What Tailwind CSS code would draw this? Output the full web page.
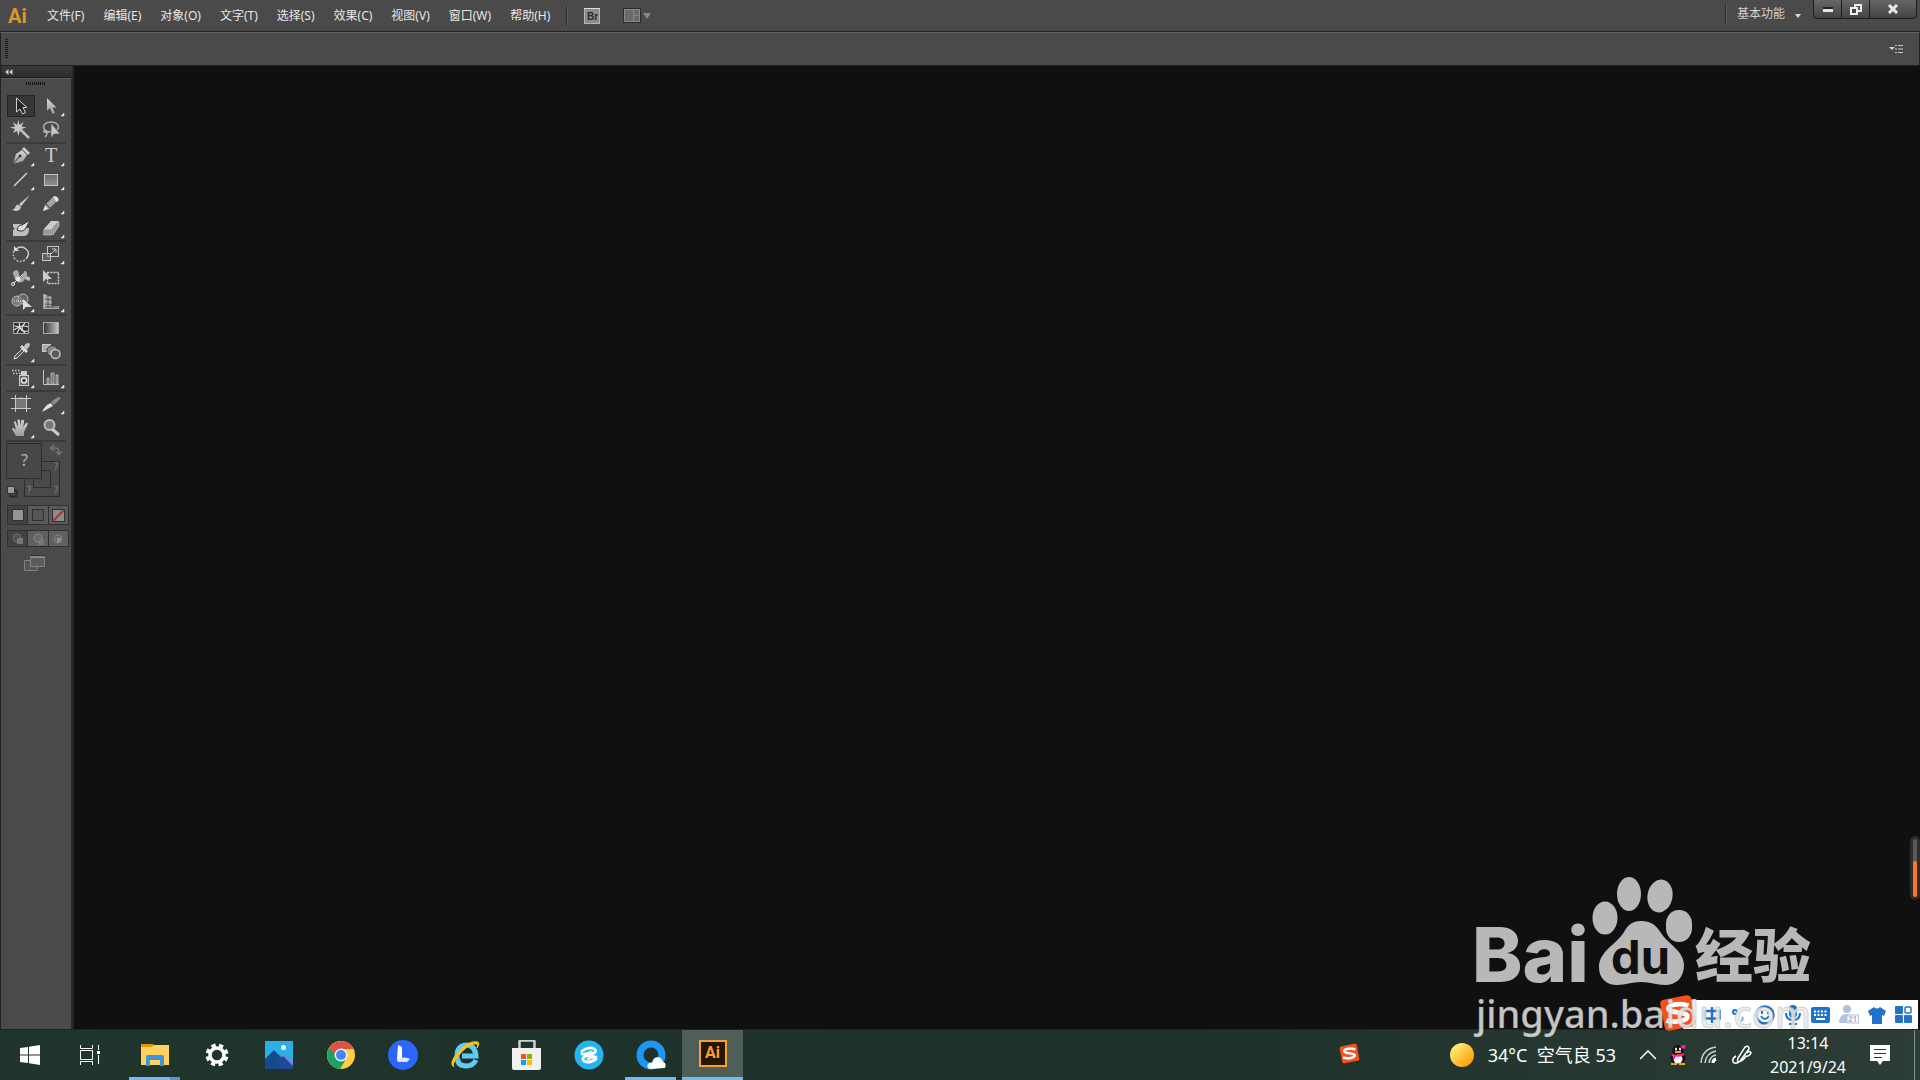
<!DOCTYPE html>
<html lang="zh-CN" class="h-full">

<head>
    <meta charset="UTF-8">
    <meta name="viewport" content="width=device-width, initial-scale=1.0">
    <title>Ai</title>
    <script src="https://cdn.jsdelivr.net/npm/@tailwindcss/browser@4"></script>
</head>

<body class="flex h-screen flex-col overflow-hidden bg-[#4a4a4a] font-['Noto_Sans','Noto_Sans_CJK_SC',sans-serif] text-xs text-[#e6e6e6]">
    <!-- shared shapes -->
    <svg class="absolute size-0">
        <defs>
            <linearGradient id="metal" x1="0" y1="0" x2="0" y2="1"><stop offset="0" stop-color="#d8d8d8" /><stop offset="1" stop-color="#9a9a9a" /></linearGradient>
            <linearGradient id="gray" x1="0" y1="0" x2="0" y2="1"><stop offset="0" stop-color="#6c6c6c" /><stop offset="1" stop-color="#8e8e8e" /></linearGradient>
            <linearGradient id="fade"><stop offset="0" stop-color="#333" /><stop offset="1" stop-color="#c8c8c8" /></linearGradient>
            <symbol id="fly" viewBox="0 0 28 24"><path d="M27 19v3h-3z" fill="#e8e8e8" stroke="#e8e8e8" stroke-width=".5" /></symbol>
            <symbol id="sogou" viewBox="0 0 36 36">
                <rect x="3" y="3" width="30" height="30" rx="4" fill="#f4511e" transform="rotate(-11 18 18)" />
                <path d="M28 11C20 8 9 10 9 14s18 3 18 7-11 7-20 4" fill="none" stroke="#fff" stroke-width="4.500" />
            </symbol>
        </defs>
    </svg>

    <!-- menu bar -->
    <header class="flex h-8 shrink-0 items-start justify-between border-b border-[#222]">
        <div class="flex h-full items-center">
            <span class="w-[47px] pl-2 font-[Roboto,sans-serif] text-xl leading-6 font-bold text-[#dc962f]">Ai</span>
            <nav class="flex gap-[19px]">
                <button type="button">文件(F)</button>
                <button type="button">编辑(E)</button>
                <button type="button">对象(O)</button>
                <button type="button">文字(T)</button>
                <button type="button">选择(S)</button>
                <button type="button">效果(C)</button>
                <button type="button">视图(V)</button>
                <button type="button">窗口(W)</button>
                <button type="button">帮助(H)</button>
            </nav>
            <span class="ml-4 h-5 w-0.5 border-r border-l border-r-[#5c5c5c] border-l-[#2e2e2e]"></span>
            <button type="button" aria-label="Bridge" class="ml-4">
                <svg width="16" height="16" viewBox="0 0 16 16"><rect x=".5" y=".5" width="15" height="15" fill="#8c8c8c" stroke="#b4b4b4" /><path d="M0 .5h16" stroke="#ddd" /><text x="3" y="12" font-size="10" font-weight="700" font-family="Liberation Sans" fill="#2b2b2b">Br</text></svg>
            </button>
            <button type="button" aria-label="排列文档" class="ml-[23px]">
                <svg width="28" height="16" viewBox="0 0 28 16"><rect x=".5" y=".5" width="17" height="14" fill="#6a6a6a" stroke="#2c2c2c" /><path d="M1.500 1.500h15v12h-15zM10.500 2v11M11 7.500h6" fill="none" stroke="#898989" /><path d="M20 5h8l-4 6z" fill="#888" /></svg>
            </button>
        </div>
        <div class="flex items-start">
            <span class="mt-1 h-5 w-0.5 border-r border-l border-r-[#5c5c5c] border-l-[#2e2e2e]"></span>
            <button type="button" class="mt-1 ml-[10px] flex items-center gap-[10px] leading-5 text-[#d0d0d0]">基本功能
                <svg class="mt-1" width="6" height="4" viewBox="0 0 6 4"><path d="M0 0h6L3 4z" fill="#d8d8d8" /></svg>
            </button>
            <div class="mr-[3px] ml-3 flex h-[19px] divide-x divide-[#1e1e1e] rounded-b-sm border border-t-0 border-[#1e1e1e] bg-linear-to-b from-[#666] to-[#444]">
                <button type="button" aria-label="最小化" class="grid w-7 place-items-center">
                    <svg width="12" height="10" viewBox="0 0 12 10"><path d="M1 5.500h10" stroke="#222" stroke-width="5" /><path d="M1 6.500h10" stroke="#e6e6e6" stroke-width="3" /></svg>
                </button>
                <button type="button" aria-label="还原" class="grid w-7 place-items-center">
                    <svg width="12" height="11" viewBox="0 0 12 11" fill="none" stroke="#eee" stroke-width="2"><path d="M5 1h6v6H5z" /><path d="M1 4h6v6H1z" fill="#444" /></svg>
                </button>
                <button type="button" aria-label="关闭" class="grid w-[46px] place-items-center">
                    <svg width="12" height="10" viewBox="0 0 12 10" fill="none" stroke="#e8e8e8" stroke-width="3"><path d="M2 1l8 8M10 1L2 9" /></svg>
                </button>
            </div>
        </div>
    </header>

    <!-- control bar -->
    <section class="flex h-[34px] shrink-0 items-center justify-between border-t border-r border-b border-l border-t-[#646464] border-r-[#222] border-b-[#222] border-l-[#222] pr-4 pl-1">
        <svg width="3" height="20" viewBox="0 0 3 20"><path d="M1.500 0v20" stroke="#1c1c1c" stroke-width="3" stroke-dasharray="1 1" /></svg>
        <button type="button" aria-label="面板菜单">
            <svg width="14" height="10" viewBox="0 0 14 10"><path d="M0 3h6L3 6z" fill="#d0d0d0" /><path d="M6 1.500h2m1 0h5M6 5h2m1 0h5M6 8.500h2m1 0h5" stroke="#c8c8c8" /></svg>
        </button>
    </section>

    <main class="relative flex min-h-0 flex-1 border-b border-[#222] bg-[#101010]">
        <!-- tools panel -->
        <aside class="flex w-[74px] shrink-0 flex-col border-r-2 border-l border-r-[#262626] border-l-[#222]">
            <div class="flex h-3 shrink-0 items-center border-b border-[#1f1f1f] bg-linear-to-b from-[#3a3a3a] to-[#2c2c2c] pl-1">
                <svg width="8" height="6" viewBox="0 0 8 6" fill="#c8c8c8"><path d="M3.500 0v6L0 3zM7.500 0v6L4 3z" /></svg>
            </div>
            <div class="flex flex-1 flex-col border-t border-r border-t-[#5e5e5e] border-r-[#2a2a2a] bg-[#4a4a4a] pl-[5px]">
                <svg class="mt-[3px] mb-[9px] ml-5 block shrink-0" width="19" height="3" viewBox="0 0 19 3"><path d="M0 1.500h19" stroke="#111" stroke-width="3" stroke-dasharray="1 1" /></svg>

                <div class="w-[60px] divide-y-2 divide-[#3a3a3a] border-b-2 border-[#3a3a3a]">
                    <div class="grid grid-cols-2 justify-items-center">
                        <button type="button" aria-label="选择工具"><svg width="28" height="24" viewBox="0 0 28 24"><rect x=".5" y="1.500" width="27" height="21" fill="#363636" stroke="#242424" /><path d="M9.500 4v14l3.500-3 2.500 5 3-1.500-2.500-5h4z" fill="#262626" stroke="#d0d0d0" /></svg></button>
                        <button type="button" aria-label="直接选择工具"><svg width="28" height="24" viewBox="0 0 28 24"><path d="M10 4v13l3-3 2.500 6 2.500-1-2.500-5.500h4z" fill="url(#metal)" /><use href="#fly" /></svg></button>
                        <button type="button" aria-label="魔棒工具"><svg width="28" height="24" viewBox="0 0 28 24"><path d="M11.500 2l1 5 4-3-2 4.500 5 1-5 1.500 2 4-4-2-1 5-1.500-5-4 2 2-4-5-1.500 5-1-2-4.500 4 3z" fill="#c8c8c8" /><path d="M13 11l9 9" stroke="#bdbdbd" stroke-width="2.500" /></svg></button>
                        <button type="button" aria-label="套索工具"><svg width="28" height="24" viewBox="0 0 28 24"><ellipse cx="14" cy="9" rx="7.500" ry="5" fill="none" stroke="#b4b4b4" stroke-width="1.500" /><path d="M8 12c-2 1-1 3 1 2s1 3-1 5" fill="none" stroke="#b4b4b4" stroke-width="1.500" /><path d="M14 5v15l3-4h6z" fill="#c8c8c8" stroke="#444" stroke-width=".6" /></svg></button>
                    </div>
                    <div class="grid grid-cols-2 justify-items-center">
                        <button type="button" aria-label="钢笔工具"><svg width="28" height="24" viewBox="0 0 28 24"><path d="M6 20l3-10 6-4 5 5-4 6z" fill="url(#metal)" /><path d="M15 5l2-2 6 6-2 2z" fill="#ccc" /><path d="M6 20l6-7" stroke="#333" /><circle cx="13" cy="12" r="1.500" fill="#333" /><use href="#fly" /></svg></button>
                        <button type="button" aria-label="文字工具"><svg width="28" height="24" viewBox="0 0 28 24"><text x="14" y="18" text-anchor="middle" font-family="Liberation Serif" font-size="20" fill="#ccc">T</text><use href="#fly" /></svg></button>
                        <button type="button" aria-label="直线段工具"><svg width="28" height="24" viewBox="0 0 28 24"><path d="M7 18L20 5" stroke="#d0d0d0" stroke-width="1.500" /><use href="#fly" /></svg></button>
                        <button type="button" aria-label="矩形工具"><svg width="28" height="24" viewBox="0 0 28 24"><rect x="7.500" y="6.500" width="13" height="11" fill="url(#gray)" stroke="#c4c4c4" /><use href="#fly" /></svg></button>
                        <button type="button" aria-label="画笔工具"><svg width="28" height="24" viewBox="0 0 28 24"><path d="M23 3L12 12l2 2.500zM11 12.500c-3 0-2 5-6 5 4 3 9 1 9-2.500z" fill="#c6c6c6" /></svg></button>
                        <button type="button" aria-label="铅笔工具"><svg width="28" height="24" viewBox="0 0 28 24"><path d="M6 19l2-6L17 4q4 1 4 4l-9 9z" fill="#a4a4a4" /><path d="M16 5q3-2 5 1t-2 4q0-3-3-5z" fill="#e6e6e6" /><path d="M9 12l4 4" stroke="#333" /><path d="M6 19l2-5 3 3z" fill="#e6e6e6" /><use href="#fly" /></svg></button>
                        <button type="button" aria-label="斑点画笔工具"><svg width="28" height="24" viewBox="0 0 28 24"><path d="M6 8h9l-3 3q5 5 7 1h3q0 8-5 8H6V14q3-1 0-3z" fill="#bebebe" /><path d="M23 4l-8 5q-4 0-5 5 6 3 9-2z" fill="#ddd" stroke="#333" /></svg></button>
                        <button type="button" aria-label="橡皮擦工具"><svg width="28" height="24" viewBox="0 0 28 24"><path d="M7 13l7-8h8l-7 8z" fill="#ccc" /><path d="M7 13h8v6H6.500zM16 13l6-7v4l-6 9z" fill="#999" stroke="#dcdcdc" stroke-width=".5" /><use href="#fly" /></svg></button>
                    </div>
                    <div class="grid grid-cols-2 justify-items-center">
                        <button type="button" aria-label="旋转工具"><svg width="28" height="24" viewBox="0 0 28 24"><path d="M9 7q5-4 10 0t0 10" fill="none" stroke="#ccc" stroke-width="1.500" /><path d="M18 18q-5 3-9 0t-2-10" fill="none" stroke="#bbb" stroke-width="1.500" stroke-dasharray="2 1.500" /><path d="M7 4v5h5z" fill="#ddd" /><use href="#fly" /></svg></button>
                        <button type="button" aria-label="比例缩放工具"><svg width="28" height="24" viewBox="0 0 28 24"><g fill="none" stroke="#c4c4c4"><rect x="10.500" y="4.500" width="11" height="10" /><rect x="5.500" y="11.500" width="8" height="7" fill="#777" fill-opacity=".5" /><path d="M14 12l5-5m-4 0h4v4" /></g><use href="#fly" /></svg></button>
                        <button type="button" aria-label="宽度工具"><svg width="28" height="24" viewBox="0 0 28 24"><path d="M6 6q5-5 6 2t4 0q2-6 4-1-1 4 3 5v3q-3 0-5-2-3 5-7 3-4-2-4-7-1 2-1-3z" fill="#aaa" /><path d="M6 18L16 8" stroke="#eee" /><g fill="#4a4a4a" stroke="#eee"><circle cx="6" cy="18" r="1.500" /><circle cx="11" cy="13" r="2" fill="#eee" /><circle cx="21" cy="12" r="1" /></g><use href="#fly" /></svg></button>
                        <button type="button" aria-label="自由变换工具"><svg width="28" height="24" viewBox="0 0 28 24"><rect x="10.500" y="6.500" width="11" height="11" fill="none" stroke="#ccc" stroke-width="1.500" stroke-dasharray="2 1" /><path d="M6 4v12l3-3h6z" fill="#ccc" /></svg></button>
                        <button type="button" aria-label="形状生成器工具"><svg width="28" height="24" viewBox="0 0 28 24"><circle cx="10" cy="11" r="5" fill="#777" stroke="#bbb" /><circle cx="16" cy="9" r="5" fill="#777" fill-opacity=".6" stroke="#bbb" /><path d="M7 11h11" stroke="#eee" stroke-dasharray="1 1" /><path d="M16 9v11l3-3h6z" fill="#ddd" /><use href="#fly" /></svg></button>
                        <button type="button" aria-label="透视网格工具"><svg width="28" height="24" viewBox="0 0 28 24"><path d="M7 4l8 3v9h7v3H7z" fill="#aaa" /><path d="M7 9l9 1M7 14l10 .5M7 17h14M11 4v14M15 7v11" fill="none" stroke="#444" stroke-width=".8" /><path d="M7 4v15" stroke="#ddd" /><use href="#fly" /></svg></button>
                    </div>
                    <div class="grid grid-cols-2 justify-items-center">
                        <button type="button" aria-label="网格工具"><svg width="28" height="24" viewBox="0 0 28 24"><rect x="6.500" y="6.500" width="15" height="11" fill="#303030" stroke="#aaa" /><path d="M7 10q6 0 7 3t7 2M12 7q2 4-2 10M18 7q-6 5 0 10M7 14q8-6 14-3" fill="none" stroke="#e0e0e0" stroke-width="1.200" /></svg></button>
                        <button type="button" aria-label="渐变工具"><svg width="28" height="24" viewBox="0 0 28 24"><rect x="6.500" y="6.500" width="15" height="11" fill="url(#fade)" stroke="#aaa" /></svg></button>
                        <button type="button" aria-label="吸管工具"><svg width="28" height="24" viewBox="0 0 28 24"><path d="M7 19l1-3 7-7 2 2-7 7z" fill="#555" stroke="#ddd" /><path d="M13 7l2-2 6 6-2 2z" fill="#ddd" /><path d="M17 7q1-4 4-4t1 4l-3 3z" fill="#c4c4c4" /><use href="#fly" /></svg></button>
                        <button type="button" aria-label="混合工具"><svg width="28" height="24" viewBox="0 0 28 24"><rect x="5.500" y="4.500" width="8" height="7" fill="#aaa" stroke="#ccc" /><path d="M10 9l3-3h5l2 3v5l-3 2h-4l-3-3z" fill="#888" stroke="#444" /><circle cx="18.500" cy="14" r="4.500" fill="#5c5c5c" stroke="#c4c4c4" stroke-width="1.500" /></svg></button>
                    </div>
                    <div class="grid grid-cols-2 justify-items-center">
                        <button type="button" aria-label="符号喷枪工具"><svg width="28" height="24" viewBox="0 0 28 24"><path d="M5 4.500h9M6 7.500h8" stroke="#ccc" stroke-width="1.500" stroke-dasharray="1.500 1.500" /><path d="M14 5h6v4h-6z" fill="#ccc" /><rect x="12.500" y="9.500" width="9" height="10" fill="#666" stroke="#ccc" /><circle cx="17" cy="14.500" r="2.500" fill="#333" stroke="#eee" stroke-width="1.500" /><use href="#fly" /></svg></button>
                        <button type="button" aria-label="柱形图工具"><svg width="28" height="24" viewBox="0 0 28 24"><path d="M6.500 4v14.500H22" fill="none" stroke="#c4c4c4" /><path d="M10 12h2v6h-2zM14 7h3v11h-3zM19 9h2v9h-2z" fill="#777" stroke="#c4c4c4" stroke-width=".8" /><use href="#fly" /></svg></button>
                    </div>
                    <div class="grid grid-cols-2 justify-items-center">
                        <button type="button" aria-label="画板工具"><svg width="28" height="24" viewBox="0 0 28 24"><rect x="8.500" y="6.500" width="11" height="10" fill="#777" /><path d="M4 6.500h20M4 16.500h20M8.500 3v17M19.500 3v17" stroke="#ccc" /><path d="M12 5.500h4" stroke="#777" /></svg></button>
                        <button type="button" aria-label="切片工具"><svg width="28" height="24" viewBox="0 0 28 24"><path d="M14 10l7-5 3 1-7 7z" fill="#8c8c8c" /><path d="M5 20q3-7 9-9l2 3z" fill="#e0e0e0" /><use href="#fly" /></svg></button>
                        <button type="button" aria-label="抓手工具"><svg width="28" height="24" viewBox="0 0 28 24"><path d="M9 20l-4-7q0-3 4 1L7 6q1-3 3 3l1 2-.5-7q2-2 2.500 1l.5 5 1-6q3-1 2.500 2l-1 5 3-4q3-1 1 3l-3 6v4z" fill="url(#metal)" /><use href="#fly" /></svg></button>
                        <button type="button" aria-label="缩放工具"><svg width="28" height="24" viewBox="0 0 28 24"><path d="M15 13l7 6" stroke="#ccc" stroke-width="3" /><circle cx="12.500" cy="9" r="5" fill="#777" stroke="#bcbcbc" stroke-width="2" /></svg></button>
                    </div>
                </div>

                <svg class="block shrink-0" width="60" height="60" viewBox="0 0 60 60" font-family="Noto Sans">
                    <g fill="none" stroke="#2d2d2d"><path d="M18.500 19.500h35v35h-35z" /><path d="M27.500 28.500h17v17h-17z" fill="#4a4a4a" /><path d="M.5 1.500h35v35H.5z" fill="#474747" /></g>
                    <text x="15" y="24" font-size="16" fill="#b4b4b4">?</text>
                    <g font-size="10" fill="#858585"><text x="48" y="28">?</text><text x="21" y="52">?</text><text x="48" y="52">?</text></g>
                    <path d="M45 6h5q3 0 3 6M48 3l-3.500 3 3.500 3M50 9.500l3 3 3-3" fill="none" stroke="#747474" stroke-width="1.500" />
                    <rect x="4.500" y="48.500" width="6" height="6" fill="none" stroke="#2d2d2d" stroke-width="2" /><rect x="1.500" y="44.500" width="7" height="7" fill="#999" stroke="#333" />
                </svg>

                <div class="mt-[3px] ml-px flex h-5 w-[62px] shrink-0 divide-x divide-[#303030] border border-[#303030] bg-[#5a5a5a]">
                    <button type="button" aria-label="颜色" class="grid flex-1 place-items-center bg-[#424242]"><span class="size-3 border border-[#303030] bg-[#949494]"></span></button>
                    <button type="button" aria-label="渐变" class="grid flex-1 place-items-center"><span class="size-3 border border-[#303030] bg-[#555]"></span></button>
                    <button type="button" aria-label="无" class="grid flex-1 place-items-center"><svg width="13" height="13" viewBox="0 0 13 13"><rect x=".5" y=".5" width="12" height="12" fill="#8c8c8c" stroke="#303030" /><path d="M1 12L12 1" stroke="#a13b35" stroke-width="2" /></svg></button>
                </div>
                <div class="mt-[5px] ml-px flex h-[17px] w-[62px] shrink-0 divide-x divide-[#303030] border border-[#303030] bg-[#606060]">
                    <button type="button" aria-label="正常绘图" class="grid flex-1 place-items-center bg-[#424242]"><svg width="12" height="12" viewBox="0 0 12 12"><circle cx="5" cy="5" r="4" fill="#505050" stroke="#707070" /><path d="M5 5h6v6H5z" fill="#777" /></svg></button>
                    <button type="button" aria-label="背面绘图" class="grid flex-1 place-items-center"><svg width="12" height="12" viewBox="0 0 12 12"><path d="M6 6h6v6H6z" fill="#777" /><circle cx="6" cy="5" r="4" fill="#686868" stroke="#858585" /></svg></button>
                    <button type="button" aria-label="内部绘图" class="grid flex-1 place-items-center"><svg width="12" height="12" viewBox="0 0 12 12"><circle cx="6" cy="6" r="4" fill="#686868" stroke="#808080" /><path d="M5 5h5l-2 4-3 1z" fill="#8e8e8e" /></svg></button>
                </div>
                <button type="button" aria-label="更改屏幕模式" class="mt-2 ml-[18px] self-start">
                    <svg width="21" height="17" viewBox="0 0 21 17"><path d="M.5 5.500h13v10H.5z" fill="#555" stroke="#808080" /><path d="M6.500 1.500h14v10h-14z" fill="#5c5c5c" stroke="#858585" /><path d="M6 .5h15" stroke="#303030" /><path d="M7 2.500h13" stroke="#888" /></svg>
                </button>
            </div>
        </aside>

        <!-- floating gauge -->
        <div class="absolute right-0 bottom-[129px] flex h-[64px] w-[10px] flex-col justify-end rounded-full border-3 border-[#2c2c2c] bg-[#5a5a5a]">
            <span class="h-9 rounded-full bg-[#ff7722]"></span>
        </div>

        <!-- input method bar -->
        <div class="absolute right-[2px] bottom-0 flex h-[29px] items-center gap-1.5 bg-white pr-1.5 text-[#1f74c9]">
            <svg class="-mt-1 -ml-6 shrink-0" width="38" height="38"><use href="#sogou" /></svg>
            <div class="flex items-center gap-[9px]">
                <svg width="18" height="16" viewBox="0 0 18 16" fill="none" stroke="#1f74c9" stroke-width="2.500"><path d="M1.500 4h15v7.500h-15zM9 0v16" /></svg>
                <svg width="16" height="18" viewBox="0 0 16 18" fill="none" stroke="#1f74c9" stroke-width="2"><circle cx="5" cy="6" r="2" /><path d="M12 11q2 2-1 4" stroke-opacity=".6" /></svg>
                <svg width="20" height="20" viewBox="0 0 20 20" fill="none" stroke="#1f74c9" stroke-width="2.500"><circle cx="10" cy="10" r="8.500" /><path d="M7 6v3M13 6v3M6 11q4 6 8 0" stroke-width="2" /></svg>
                <svg width="18" height="20" viewBox="0 0 18 20"><rect x="5" y="0" width="8" height="13" rx="4" fill="#1f74c9" /><path d="M2 8q0 7 7 7t7-7M9 15v4M5 19h8" fill="none" stroke="#1f74c9" stroke-width="2" /></svg>
                <svg width="19" height="16" viewBox="0 0 19 16"><rect width="19" height="16" rx="2" fill="#1f74c9" /><path d="M3 4.500h13M3 8h13" stroke="#fff" stroke-width="2" stroke-dasharray="2 1.500" /><path d="M5 12h9" stroke="#fff" stroke-width="2" /></svg>
                <svg width="20" height="19" viewBox="0 0 20 19"><circle cx="8" cy="4" r="4" fill="#b4c1dc" /><path d="M0 18q0-9 8-9t5 9z" fill="#b4c1dc" /><rect x="8" y="10" width="11.500" height="8" fill="#fff" stroke="#b4c1dc" /><text x="9" y="17" font-size="8" font-weight="700" fill="#a9b6d2">21</text></svg>
                <svg width="18" height="18" viewBox="0 0 18 18"><path d="M6 1q3 3 6 0l6 4-2 5-2-1v9H4V9l-2 1-2-5z" fill="#1f74c9" /></svg>
                <svg width="17" height="17" viewBox="0 0 17 17" fill="#1f74c9"><rect width="8" height="8" rx="1" /><rect y="9" width="8" height="8" rx="1" /><rect x="9" y="9" width="8" height="8" rx="1" /><rect x="10" y="1" width="6" height="6" rx="1" fill="none" stroke="#1f74c9" stroke-width="1.500" /></svg>
            </div>
        </div>

        <!-- watermark -->
        <svg class="pointer-events-none absolute right-[90px] -bottom-[11px] z-10" width="360" height="170" viewBox="0 0 360 170">
            <g fill="#b8b8b8">
                <text x="2" y="112" font-family="Inter" font-weight="800" font-size="76">Bai</text>
                <ellipse cx="135" cy="48" rx="12.500" ry="16.500" />
                <ellipse cx="159" cy="24" rx="12" ry="17" />
                <ellipse cx="190" cy="26" rx="12.500" ry="16.500" transform="rotate(10 190 26)" />
                <rect x="196" y="40" width="26" height="32" rx="12.500" ry="14" />
                <path d="M171 51c-9 0-13 4-17 11-7 12-25 19-25 35 0 12 8 18 18 18 9 0 14-3 24-3s15 3 24 3c11 0 19-7 19-20 0-14-16-21-23-32-5-8-10-12-20-12z" />
                <text x="225" y="107" font-family="Noto Sans CJK SC" font-weight="900" font-size="58">经验</text>
            </g>
            <text x="141" y="104" font-family="Inter" font-weight="700" font-size="47" fill="#101010">du</text>
            <text x="6" y="158" font-family="Noto Sans" font-weight="500" font-size="38" fill="#e8e8e8" fill-opacity=".86" stroke="#777" stroke-opacity=".25" stroke-width="1">jingyan.baidu.com</text>
        </svg>
    </main>

    <!-- taskbar -->
    <footer class="flex h-[50px] shrink-0 justify-between bg-linear-to-r from-[#20352b] via-[#1d302a] via-60% to-[#2c3d35] text-white">
        <div class="flex">
            <button type="button" aria-label="开始" class="grid w-15 place-items-center"><svg width="20" height="20" viewBox="0 0 20 20" fill="#fff"><path d="M0 3l8-1v7.500H0zM9 1.800L20 0v9.500H9zM0 10.500h8V18l-8-1zM9 10.500h11V20L9 18.200z" /></svg></button>
            <button type="button" aria-label="任务视图" class="mr-1 grid w-15 place-items-center"><svg width="20" height="20" viewBox="0 0 20 20" fill="none" stroke="#fff"><path d="M.5 0v3.500h12V0M.5 5.500h12v9H.5zM.5 20v-3.500h12V20M18.500 0v5M18.500 10v9" /><path d="M17 6h3v3h-3z" fill="#fff" stroke="none" /></svg></button>
            <div class="flex gap-px">
                <button type="button" aria-label="文件资源管理器" class="relative grid w-[61px] place-items-center"><svg width="28" height="24" viewBox="0 0 28 24"><path d="M0 1h12l2 3H0z" fill="#e09a00" /><path d="M0 4h11l2-2h15v20H0z" fill="#ffd35e" /><path d="M5 23V14q0-2 2-2h14q2 0 2 2v9h-4v-6h-10v6z" fill="#3d96dc" /></svg><span class="absolute bottom-0 left-[5px] h-[3px] w-[51px] border-r-10 border-[#5f93c4] bg-[#76b9ed]"></span></button>
                <button type="button" aria-label="设置" class="grid w-[61px] place-items-center"><svg width="24" height="24" viewBox="0 0 24 24" fill="none" stroke="#fff"><circle cx="12" cy="12" r="9.500" stroke-width="4" stroke-dasharray="4.200 3.260" transform="rotate(10 12 12)" /><circle cx="12" cy="12" r="7" stroke-width="3.500" /></svg></button>
                <button type="button" aria-label="照片" class="grid w-[61px] place-items-center"><svg width="28" height="28" viewBox="0 0 28 28"><path d="M0 0h28v28H0z" fill="#2baeea" /><path d="M10 23l10-10 8 7v8z" fill="#7388d8" /><path d="M0 18L9 9l19 19H0z" fill="#124a8c" /><path d="M12 22l6-7 10 10v3H17z" fill="#204a98" /><circle cx="18.500" cy="6.500" r="2.500" fill="#fff" /></svg></button>
                <button type="button" aria-label="Chrome" class="grid w-[61px] place-items-center"><svg width="28" height="28" viewBox="0 0 28 28"><circle cx="14" cy="14" r="14" fill="#ffce44" /><path d="M14 14L2 7a14 14 0 0 0 11 21l5-8z" fill="#1aa260" /><path d="M2 7a14 14 0 0 1 24.500 1H14q-5 1-6 6z" fill="#de5246" /><circle cx="14" cy="14" r="6.500" fill="#f1f1f1" /><circle cx="14" cy="14" r="5" fill="#4587f3" /></svg></button>
                <button type="button" aria-label="L" class="grid w-[61px] place-items-center"><svg width="30" height="30" viewBox="0 0 30 30"><circle cx="15" cy="15" r="15" fill="#2d66fa" /><path d="M10 5l4 2v12h-5z" fill="#fff" /><path d="M9 19q8-3 13 0l-3 3H11q-2 0-2-3z" fill="#e4e8ff" /></svg></button>
                <button type="button" aria-label="Internet Explorer" class="grid w-[61px] place-items-center"><svg width="30" height="30" viewBox="0 0 30 30" fill="none"><path d="M26 20q-3 6-10 6-9 0-9-10T16 5q9 0 10 11H12" stroke="#5ecdf5" stroke-width="5" /><path d="M4 27Q-2 24 8 12T28 2q2 2-1 6 2-5-3-4-7 1-15 11T4 27z" fill="#f5c41c" stroke="#f5c41c" /></svg></button>
                <button type="button" aria-label="Microsoft Store" class="grid w-[61px] place-items-center"><svg width="30" height="30" viewBox="0 0 30 30"><path d="M7.500 9V2q0-1.500 1.500-1.500h12q1.500 0 1.500 1.500v7" fill="none" stroke="#d0d0d4" stroke-width="2.500" /><path d="M0 8h29v20q0 2-2 2H2q-2 0-2-2z" fill="#f0f0f0" /><path d="M9 14h5v5H9z" fill="#f25022" /><path d="M15 14h5v5h-5z" fill="#7fba00" /><path d="M9 20h5v5H9z" fill="#00a4ef" /><path d="M15 20h5v5h-5z" fill="#ffb900" /></svg></button>
                <button type="button" aria-label="2345" class="grid w-[61px] place-items-center"><svg width="30" height="30" viewBox="0 0 30 30"><circle cx="15" cy="15" r="14.500" fill="#25b4f0" /><path d="M8 11q5-4 10-3 6 2 2 5-3 2-8 3-5 2-2 5 5 3 12-2M8 14q4 1 9-2M22 17q-4-1-8 2" fill="none" stroke="#fff" stroke-width="2.800" stroke-linecap="round" /></svg></button>
                <button type="button" aria-label="QQ浏览器" class="relative grid w-[61px] place-items-center"><svg width="30" height="30" viewBox="0 0 30 30"><circle cx="15" cy="15" r="11" fill="none" stroke="#1c97f4" stroke-width="7" /><path d="M14 29q-4-1-2-5 2-2 4-1 1-6 6-6 4 1 5 5 4 1 2 6z" fill="#fff" /></svg><span class="absolute bottom-0 left-[5px] h-[3px] w-[51px] bg-[#76b9ed]"></span></button>
                <button type="button" aria-label="Adobe Illustrator" class="relative grid w-[61px] place-items-center bg-[#4f5f57]"><span class="-mt-1 grid h-[27px] w-7 place-items-center border-2 border-[#f7a134] bg-[#261602] font-[Roboto,sans-serif] text-base leading-5 font-bold text-[#f7a134]">Ai</span><span class="absolute bottom-0 left-0 h-[3px] w-full bg-[#76b9ed]"></span></button>
            </div>
        </div>
        <div class="flex items-center">
            <svg class="mr-[90px] -mt-1" width="21" height="21"><use href="#sogou" /></svg>
            <a href="#" class="flex items-center gap-3.5 text-lg leading-6">
                <svg width="24" height="24" viewBox="0 0 24 24"><defs><linearGradient id="sun" x2="1" y2="1"><stop offset=".2" stop-color="#ffe66e" /><stop offset=".9" stop-color="#ff9a00" /></linearGradient></defs><circle cx="12" cy="12" r="12" fill="url(#sun)" /></svg>
                <span>34°C&nbsp; 空气良 53</span>
            </a>
            <div class="ml-6 flex items-center gap-3.5">
                <svg width="16" height="10" viewBox="0 0 16 10"><path d="M0 9l8-8 8 8" fill="none" stroke="#fff" stroke-width="1.500" /></svg>
                <svg width="16" height="20" viewBox="0 0 16 20"><ellipse cx="8" cy="6" rx="5.500" ry="6" fill="#111" /><ellipse cx="8" cy="13" rx="7.500" ry="6" fill="#111" /><ellipse cx="8" cy="14" rx="4.500" ry="4.500" fill="#fff" /><ellipse cx="6" cy="4" rx="1" ry="1.500" fill="#fff" /><ellipse cx="10" cy="4" rx="1" ry="1.500" fill="#fff" /><path d="M5 7h6M1 19h6M9 19h6" stroke="#f5a800" stroke-width="2" /><path d="M2 10q6 2 12-1M4 10v4M11 1l4 2M15 0l-3 3" stroke="#ff1cb5" stroke-width="2" fill="none" /></svg>
                <svg width="18" height="18" viewBox="0 0 18 18" fill="none" stroke="#c8d0cc" stroke-width="1.500"><path d="M1 17Q2 3 16 1M5 17Q6 7 16 5M9 17q1-7 7-8" /><path d="M13 17q0-3 3-4" stroke="#fff" stroke-width="3" /></svg>
                <svg width="20" height="20" viewBox="0 0 20 20" fill="none" stroke="#fff" stroke-width="1.500"><path d="M4 11q-4 2-3 6 3 3 7-1L17 4q0-4-4-2L6 13q-1 3 0 4 5-1 8-6M13 11q4 1 6-3-1-3-4 0" /></svg>
            </div>
            <time class="ml-[18px] text-center text-base leading-6">13:14<br>2021/9/24</time>
            <button type="button" aria-label="通知" class="ml-6"><svg width="20" height="20" viewBox="0 0 20 20"><path d="M0 0h20v16h-7l-3 4-3-4H0z" fill="#fff" /><path d="M4 4.500h12M4 8.500h12M4 12.500h8" stroke="#26382f" stroke-width="1.200" /></svg></button>
            <span class="mr-[5px] ml-6 h-full w-px bg-[#82908a]"></span>
        </div>
    </footer>
</body>

</html>
